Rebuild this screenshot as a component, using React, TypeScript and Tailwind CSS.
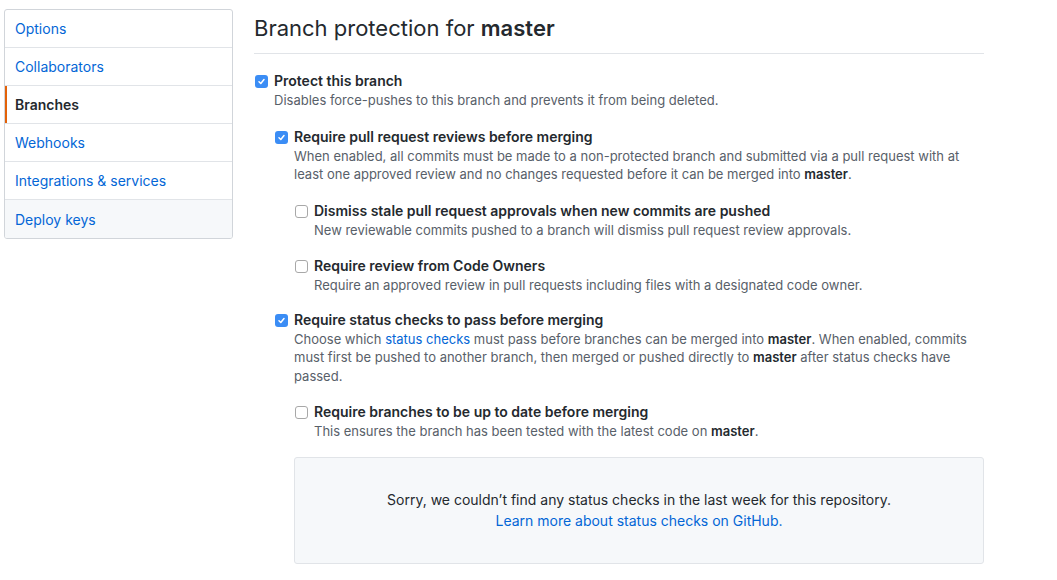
import type { ReactNode } from 'react'

const FONT = { fontFamily: 'Inter, "Liberation Sans", sans-serif' }

function Checkbox({ checked }: { checked?: boolean }) {
  if (checked) {
    return (
      <span className="mt-[4px] flex h-[13px] w-[13px] items-center justify-center rounded-[3px] bg-[#3b8df5]">
        <svg width="9" height="9" viewBox="0 0 9 9" fill="none">
          <path d="M2 4.8 L3.8 6.5 L7 2.5" stroke="white" strokeWidth="1.5" strokeLinecap="round" strokeLinejoin="round" />
        </svg>
      </span>
    )
  }
  return <span className="mt-[4px] block h-[13px] w-[13px] rounded-[3px] border border-[#a8a8a8] bg-white" />
}

function Option({
  checked,
  label,
  children,
  nested,
  className = '',
}: {
  checked?: boolean
  label: string
  children: ReactNode
  nested?: ReactNode
  className?: string
}) {
  return (
    <div className={`flex ${className}`}>
      <div className="w-[20px] shrink-0 pl-[1px]">
        <Checkbox checked={checked} />
      </div>
      <div className="flex-1">
        <div className="text-[14px] font-semibold leading-[20px] text-[#24292e]">{label}</div>
        <p className="text-[13px] leading-[18.5px] text-[#586069]">{children}</p>
        {nested}
      </div>
    </div>
  )
}

const menu = ['Options', 'Collaborators', 'Branches', 'Webhooks', 'Integrations & services', 'Deploy keys']

export default function App() {
  return (
    <div className="min-h-[580px] bg-white" style={FONT}>
      <div className="flex gap-[21px] pl-[4px] pt-[9px]">
        {/* Settings menu */}
        <nav className="w-[229px] shrink-0 self-start overflow-hidden rounded-[3px] border border-[#d1d5da]">
          {menu.map((item, i) => {
            const active = item === 'Branches'
            const last = i === menu.length - 1
            return (
              <div
                key={item}
                className={`relative flex h-[38px] items-center pl-[10px] text-[14px] ${
                  last ? 'h-[36px] bg-[#f6f8fa]' : 'border-b border-[#e1e4e8]'
                } ${active ? 'font-semibold text-[#24292e]' : 'text-[#0366d6]'}`}
              >
                {active && <span className="absolute bottom-0 left-0 top-0 w-[2px] bg-[#e36209]" />}
                {item}
              </div>
            )
          })}
        </nav>

        {/* Main */}
        <main className="w-[730px] pt-[4px]">
          <h2 className="border-b border-[#e1e4e8] pb-[10px] text-[22px] font-normal leading-[30px] text-[#24292e]">
            Branch protection for <span className="font-semibold">master</span>
          </h2>

          <Option
            checked
            className="mt-[17px]"
            label="Protect this branch"
            nested={
              <>
                <Option
                  checked
                  className="mt-[17px]"
                  label="Require pull request reviews before merging"
                  nested={
                    <>
                      <Option className="mt-[17px]" label="Dismiss stale pull request approvals when new commits are pushed">
                        New reviewable commits pushed to a branch will dismiss pull request review approvals.
                      </Option>
                      <Option className="mt-[17px]" label="Require review from Code Owners">
                        Require an approved review in pull requests including files with a designated code owner.
                      </Option>
                    </>
                  }
                >
                  When enabled, all commits must be made to a non-protected branch and submitted via a pull request with
                  at least one approved review and no changes requested before it can be merged into{' '}
                  <strong className="font-semibold text-[#24292e]">master</strong>.
                </Option>

                <Option
                  checked
                  className="mt-[15px]"
                  label="Require status checks to pass before merging"
                  nested={
                    <>
                      <Option className="mt-[17px]" label="Require branches to be up to date before merging">
                        This ensures the branch has been tested with the latest code on{' '}
                        <strong className="font-semibold text-[#24292e]">master</strong>.
                      </Option>
                      <div className="mt-[16px] flex h-[107px] flex-col items-center justify-center rounded-[3px] border border-[#e1e4e8] bg-[#f6f8fa] text-[14px] leading-[21px]">
                        <p className="text-[#24292e]">
                          Sorry, we couldn’t find any status checks in the last week for this repository.
                        </p>
                        <a className="text-[#0366d6]">Learn more about status checks on GitHub.</a>
                      </div>
                    </>
                  }
                >
                  Choose which <a className="text-[#0366d6]">status checks</a> must pass before branches can be merged
                  into <strong className="font-semibold text-[#24292e]">master</strong>. When enabled, commits must first
                  be pushed to another branch, then merged or pushed directly to{' '}
                  <strong className="font-semibold text-[#24292e]">master</strong> after status checks have passed.
                </Option>
              </>
            }
          >
            Disables force-pushes to this branch and prevents it from being deleted.
          </Option>
        </main>
      </div>
    </div>
  )
}
